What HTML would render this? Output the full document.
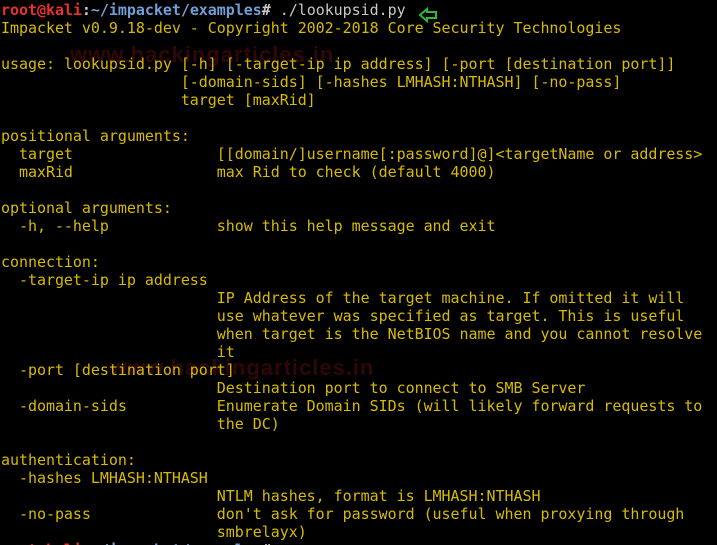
<!DOCTYPE html>
<html><head><style>
html,body{margin:0;padding:0;background:#000;width:717px;height:545px;overflow:hidden;position:relative}
pre{margin:0;position:absolute;left:1px;top:1px;font-family:"DejaVu Sans Mono","Liberation Mono",monospace;font-size:15px;line-height:18px;color:#d7bb00;letter-spacing:-0.04px}
.r{color:#e8322e;font-weight:bold}.b{color:#6f9fd6;font-weight:bold}.w{color:#c8c8c8;font-weight:bold}.n{color:#c8c8c8}
.wm{position:absolute;font-family:"Liberation Sans",sans-serif;font-weight:bold;font-size:22px;color:#300606;letter-spacing:1px}
</style></head><body>
<div class="wm" style="left:70px;top:42px">www.hackingarticles.in</div>
<div class="wm" style="left:110px;top:355px">www.hackingarticles.in</div>
<pre><span class="r">root@kali</span><span class="w">:</span><span class="b">~/impacket/examples</span><span class="w">#</span><span class="n"> ./lookupsid.py</span>
Impacket v0.9.18-dev - Copyright 2002-2018 Core Security Technologies

usage: lookupsid.py [-h] [-target-ip ip address] [-port [destination port]]
                    [-domain-sids] [-hashes LMHASH:NTHASH] [-no-pass]
                    target [maxRid]

positional arguments:
  target                [[domain/]username[:password]@]&lt;targetName or address&gt;
  maxRid                max Rid to check (default 4000)

optional arguments:
  -h, --help            show this help message and exit

connection:
  -target-ip ip address
                        IP Address of the target machine. If omitted it will
                        use whatever was specified as target. This is useful
                        when target is the NetBIOS name and you cannot resolve
                        it
  -port [destination port]
                        Destination port to connect to SMB Server
  -domain-sids          Enumerate Domain SIDs (will likely forward requests to
                        the DC)

authentication:
  -hashes LMHASH:NTHASH
                        NTLM hashes, format is LMHASH:NTHASH
  -no-pass              don't ask for password (useful when proxying through
                        smbrelayx)
<span class="r">root@kali</span><span class="w">:</span><span class="b">~/impacket/examples</span><span class="w"># </span></pre>
<svg style="position:absolute;left:418px;top:7px" width="20" height="16" viewBox="0 0 20 16"><path d="M2 8 L9 2 V5 H18 V11 H9 V14 Z" fill="none" stroke="#2fb83a" stroke-width="2"/></svg>
</body></html>
